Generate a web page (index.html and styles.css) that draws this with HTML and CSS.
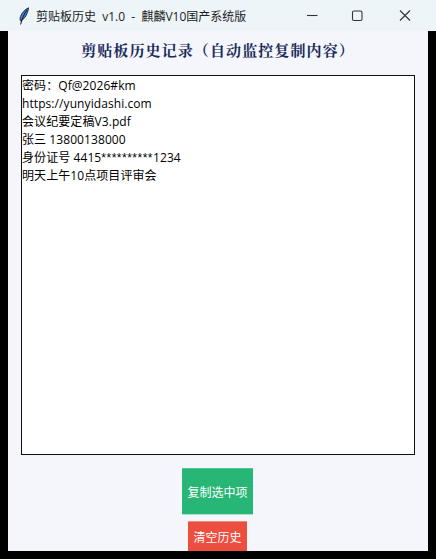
FILE: index.html
```html
<!DOCTYPE html>
<html lang="zh-CN">
<head>
<meta charset="utf-8">
<title>剪贴板历史</title>
<link rel="stylesheet" href="styles.css">
</head>
<body>
<div class="titlebar">
  <svg class="app-icon" width="12" height="18" viewBox="0 0 12 18">
    <path d="M10.500 .8C7.500 2 3.800 5.800 2.500 9.500c-.6 1.800-.5 3.300 .1 4.500 2.800-1.300 5.200-4.300 6.500-7.700.8-2 1.400-3.900 1.400-5.500z" fill="#3f7fdc" stroke="#20242c" stroke-width=".9"/>
    <path d="M9 2.800C6.500 6.500 4 11.500 2.600 17.500" fill="none" stroke="#11151c" stroke-width="1"/>
  </svg>
  <span class="title-text">剪贴板历史&nbsp; v1.0&nbsp; -&nbsp; 麒麟V10国产系统版</span>
  <div class="win-controls">
    <svg class="ctl" width="46" height="31" viewBox="0 0 46 31"><path d="M17 15.500h10.500" stroke="#333" stroke-width="1.100"/></svg>
    <svg class="ctl" width="46" height="31" viewBox="0 0 46 31"><rect x="16.500" y="11" width="9.500" height="9.500" rx="1.500" fill="none" stroke="#333" stroke-width="1.100"/></svg>
    <svg class="ctl" width="46" height="31" viewBox="0 0 46 31"><path d="M18 10.500l10 10M28 10.500l-10 10" stroke="#333" stroke-width="1.100"/></svg>
  </div>
</div>
<main class="client">
  <h1 class="heading">剪贴板历史记录（自动监控复制内容）</h1>
  <div class="listbox">
    <div class="item">密码：Qf@2026#km</div>
    <div class="item">https://yunyidashi.com</div>
    <div class="item">会议纪要定稿V3.pdf</div>
    <div class="item">张三 13800138000</div>
    <div class="item">身份证号 4415<span class="stars">**********</span>1234</div>
    <div class="item">明天上午10点项目评审会</div>
  </div>
  <button class="btn btn-copy">复制选中项</button>
  <button class="btn btn-clear">清空历史</button>
</main>
</body>
</html>
```
FILE: styles.css
```css
html, body {
  margin: 0;
  padding: 0;
  height: 559px;
  overflow: hidden;
  background: #000;
}
body {
  display: flex;
  flex-direction: column;
  font-family: "Noto Sans CJK SC", "Open Sans", sans-serif;
}
.titlebar {
  flex: 0 0 31px;
  display: flex;
  align-items: center;
  background: #edf5f9;
  color: #222;
  font-family: "Open Sans", "Noto Sans CJK SC", sans-serif;
  font-size: 12px;
  padding-left: 18px;
}
.app-icon {
  flex: none;
  margin-right: 6px;
}
.title-text {
  flex: 1;
  white-space: nowrap;
}
.win-controls {
  display: flex;
  margin-right: 8px;
}
.ctl {
  display: block;
}
.client {
  flex: 0 0 520px;
  margin: 0 8px;
  height: 520px;
  overflow: hidden;
  background: #f4f6fb;
  display: flex;
  flex-direction: column;
  align-items: center;
}
.heading {
  margin: 8px 0 0;
  height: 22px;
  line-height: 22px;
  font-family: "Noto Serif CJK SC", "Noto Sans CJK SC", serif;
  font-size: 15px;
  font-weight: 700;
  color: #1a2a5a;
  letter-spacing: 1.1px;
  white-space: nowrap;
}
.listbox {
  box-sizing: border-box;
  width: 394px;
  height: 380px;
  margin-top: 14px;
  padding: 1px 0 0 0;
  background: #fff;
  border: 1px solid #111;
  color: #000;
  font-family: "Open Sans", "Noto Sans CJK SC", sans-serif;
  font-size: 12px;
  letter-spacing: 0.08px;
}
.item {
  height: 18px;
  line-height: 18px;
  white-space: nowrap;
}
.stars {
  font-family: "Liberation Sans", sans-serif;
  letter-spacing: 0.5px;
}
.btn {
  display: block;
  border: 0;
  padding: 0;
  margin-right: 1px;
  color: #fff;
  font-family: "Noto Sans CJK SC", sans-serif;
  font-size: 12px;
}
.btn-copy {
  flex: none;
  width: 71px;
  height: 47px;
  margin-top: 13px;
  background: #27b676;
  border-top: 1px solid #4fc795;
  border-bottom: 1px solid #a9e3cb;
}
.btn-clear {
  flex: none;
  width: 59px;
  height: 30px;
  margin-top: 6px;
  background: #ec4e3f;
  border-top: 1px solid #f28a80;
}
```
